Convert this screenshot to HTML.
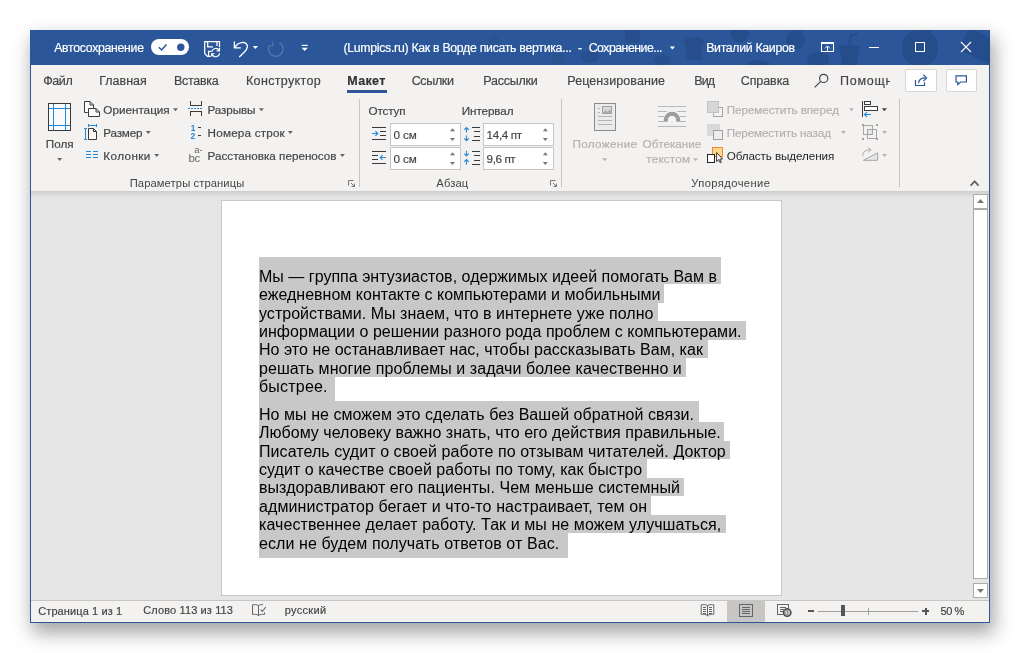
<!DOCTYPE html>
<html lang="ru"><head><meta charset="utf-8"><title>Word</title>
<style>
html,body{margin:0;padding:0;background:#fff;}
body{width:1020px;height:653px;position:relative;overflow:hidden;font-family:"Liberation Sans",sans-serif;}
.a{position:absolute;}
#win{left:30px;top:30px;width:960px;height:593px;background:#e6e6e6;box-shadow:3px 8.5px 18px 1px rgba(0,0,0,.36);}
#title{left:30px;top:30px;width:960px;height:35px;background:#2b579a;overflow:hidden;}
#ribbon{left:31px;top:65px;width:958px;height:126px;background:#f3f2f1;}
#rshadow{left:31px;top:191px;width:958px;height:8px;background:linear-gradient(#cdcdcd,#dadada 35%,#e2e2e2 70%,#e6e6e6);}
#bl{left:30px;top:65px;width:1px;height:558px;background:#2b579a;}
#br{left:989px;top:65px;width:1px;height:558px;background:#2b579a;}
#bb{left:30px;top:622px;width:960px;height:1px;background:#2b579a;}
#page{left:221px;top:200px;width:559px;height:394px;background:#fff;border:1px solid #c8c8c8;}
#status{left:31px;top:600px;width:958px;height:21px;background:#f3f2f1;border-top:1px solid #c6c6c6;}
#viewact{left:727px;top:601px;width:38px;height:21px;background:#c8c6c4;}
.t{position:absolute;white-space:pre;line-height:16px;-webkit-text-stroke:0.18px;}
.dl{position:absolute;left:259px;white-space:pre;font-size:16px;line-height:18px;color:#000;}
.hl{position:absolute;background:#c8c8c8;}
.inp{position:absolute;background:#fff;border:1px solid #c8c6c4;box-sizing:border-box;}
.btn{position:absolute;background:#fff;border:1px solid #d8d6d4;border-radius:2px;box-sizing:border-box;}
.sb{position:absolute;background:#fff;border:1px solid #ababab;box-sizing:border-box;}
#ico{position:absolute;left:0;top:0;width:1020px;height:653px;}
#txt{left:0;top:0;width:1020px;height:653px;will-change:transform;}

</style></head>
<body>
<div id="win" class="a"></div>
<div id="title" class="a">
<svg width="960" height="35" viewBox="30 30 960 35" style="position:absolute;left:0;top:0">
<g fill="#264d8b">
<circle cx="920" cy="48" r="18.5"/><ellipse cx="927" cy="31" rx="6" ry="4" transform="rotate(-35 927 31)"/>
<rect x="962" y="34" width="34" height="24" rx="2" transform="rotate(27 979 46)"/>
<path d="M838.5 45.5 H860.5 L856.5 66 H842.5 Z M848.2 45.5 L850.4 34.6 L857.6 32.6 L858 34.4 L852 36.2 L850.2 45.5 Z"/>
<ellipse cx="818" cy="59.5" rx="11" ry="7.5"/>
<circle cx="795.5" cy="40" r="9.5"/><ellipse cx="799" cy="30" rx="4" ry="2.5" transform="rotate(-35 799 30)"/>
<circle cx="739.5" cy="33.5" r="9"/>
<ellipse cx="759" cy="66" rx="12" ry="6"/>
</g>
<g fill="#274f8e">
<path d="M684 41 C684 36 704 36 704 41 C704 44 702 45 702 47 V60 H686 V47 C686 45 684 44 684 41 Z"/>
<rect x="625" y="30" width="15" height="13" rx="3"/>
<ellipse cx="662" cy="60" rx="8" ry="5"/>
<ellipse cx="590" cy="57" rx="9" ry="6"/>
</g>
<g fill="#29538f">
<ellipse cx="558" cy="59" rx="7" ry="5"/>
<ellipse cx="494" cy="41" rx="5" ry="6"/>
</g>
</svg>
</div>
<div id="ribbon" class="a"></div>
<div id="rshadow" class="a"></div>
<div id="page" class="a"></div>
<div id="status" class="a"></div>
<div id="viewact" class="a"></div>
<div id="bl" class="a"></div><div id="br" class="a"></div><div id="bb" class="a"></div>
<!-- scrollbar -->
<div class="sb" style="left:973px;top:194px;width:15px;height:15px"></div>
<div class="sb" style="left:973px;top:209px;width:15px;height:370px"></div>
<div class="sb" style="left:973px;top:583px;width:15px;height:15px"></div>
<!-- ribbon inputs and buttons -->
<div class="inp" style="left:390px;top:123px;width:71px;height:23px"></div>
<div class="inp" style="left:390px;top:147px;width:71px;height:23px"></div>
<div class="inp" style="left:483px;top:123px;width:71px;height:23px"></div>
<div class="inp" style="left:483px;top:147px;width:71px;height:23px"></div>
<div class="btn" style="left:905px;top:69px;width:32px;height:23px"></div>
<div class="btn" style="left:946px;top:69px;width:31px;height:23px"></div>
<div class="a" style="left:347px;top:90px;width:40px;height:3px;background:#2b579a"></div>
<div id="txt" class="a">
<div class="hl" style="left:259px;top:257px;width:462.3px;height:27px"></div>
<div class="hl" style="left:259px;top:284px;width:405.4px;height:19px"></div>
<div class="hl" style="left:259px;top:303px;width:398.5px;height:18px"></div>
<div class="hl" style="left:259px;top:321px;width:486.5px;height:19px"></div>
<div class="hl" style="left:259px;top:340px;width:448.7px;height:18px"></div>
<div class="hl" style="left:259px;top:358px;width:427.1px;height:19px"></div>
<div class="hl" style="left:259px;top:377px;width:75.9px;height:24px"></div>
<div class="dl" style="top:268px;letter-spacing:0.020px">Мы — группа энтузиастов, одержимых идеей помогать Вам в</div>
<div class="dl" style="top:286px;letter-spacing:0.009px">ежедневном контакте с компьютерами и мобильными</div>
<div class="dl" style="top:305px;letter-spacing:0.029px">устройствами. Мы знаем, что в интернете уже полно</div>
<div class="dl" style="top:323px;letter-spacing:0.032px">информации о решении разного рода проблем с компьютерами.</div>
<div class="dl" style="top:341px;letter-spacing:0.029px">Но это не останавливает нас, чтобы рассказывать Вам, как</div>
<div class="dl" style="top:360px;letter-spacing:0.048px">решать многие проблемы и задачи более качественно и</div>
<div class="dl" style="top:378px;letter-spacing:0.200px">быстрее.</div>
<div class="hl" style="left:259px;top:401px;width:440.1px;height:21px"></div>
<div class="hl" style="left:259px;top:422px;width:465.4px;height:19px"></div>
<div class="hl" style="left:259px;top:441px;width:470.8px;height:18px"></div>
<div class="hl" style="left:259px;top:459px;width:388.1px;height:19px"></div>
<div class="hl" style="left:259px;top:478px;width:424.5px;height:18px"></div>
<div class="hl" style="left:259px;top:496px;width:392.0px;height:19px"></div>
<div class="hl" style="left:259px;top:515px;width:466.9px;height:18px"></div>
<div class="hl" style="left:259px;top:533px;width:309.2px;height:25px"></div>
<div class="dl" style="top:406px;letter-spacing:0.048px">Но мы не сможем это сделать без Вашей обратной связи.</div>
<div class="dl" style="top:424px;letter-spacing:0.025px">Любому человеку важно знать, что его действия правильные.</div>
<div class="dl" style="top:443px;letter-spacing:0.067px">Писатель судит о своей работе по отзывам читателей. Доктор</div>
<div class="dl" style="top:461px;letter-spacing:0.037px">судит о качестве своей работы по тому, как быстро</div>
<div class="dl" style="top:479px;letter-spacing:0.052px">выздоравливают его пациенты. Чем меньше системный</div>
<div class="dl" style="top:498px;letter-spacing:0.102px">администратор бегает и что-то настраивает, тем он</div>
<div class="dl" style="top:516px;letter-spacing:0.073px">качественнее делает работу. Так и мы не можем улучшаться,</div>
<div class="dl" style="top:535px;letter-spacing:0.081px">если не будем получать ответов от Вас.</div>
<svg id="ico" viewBox="0 0 1020 653">
<!-- title bar: toggle -->
<rect x="151" y="39" width="38" height="16" rx="8" fill="#fff"/>
<path d="M158.8 47.2 L161.7 50 L166.4 44.4" fill="none" stroke="#2b579a" stroke-width="1.5"/>
<circle cx="180.8" cy="47.2" r="3.7" fill="#2b579a"/>
<!-- save icon -->
<g fill="none" stroke="#fff" stroke-width="1.25">
<path d="M210.6 56.3 H207.4 L204.7 53.6 V41.7 H219.5 V47.3"/>
<path d="M207.7 41.7 V46.8 H213 M217 41.7 V46"/>
<path d="M208.6 56 V51.3 H211.6"/>
<path d="M212 51.6 A3.9 3.9 0 0 1 219.2 50.4 M219.5 47.9 V50.8 H216.6" stroke-width="1.15"/>
<path d="M219.6 53.2 A3.9 3.9 0 0 1 212 54 M211.6 56.6 V53.7 H214.5" stroke-width="1.15"/>
</g>
<!-- undo -->
<g fill="none" stroke="#fff" stroke-width="1.3">
<path d="M234.4 41.4 V47.9 H240.8"/>
<path d="M234.8 47.6 C237.5 42.4 245.6 40.2 247.3 45.6 C248.4 49.8 243.2 53 239.2 57"/>
</g>
<path d="M252.8 46 H258 L255.4 49 Z" fill="#fff"/>
<!-- redo (disabled) -->
<g fill="none" stroke="#5577b0" stroke-width="1.3">
<path d="M279.4 42.6 A7.3 7.3 0 1 1 268.9 46.6"/>
<path d="M268.2 46 H272.7 V41.5" stroke-width="1.1"/>
</g>
<!-- customize QAT -->
<rect x="301.7" y="44.8" width="6" height="1.2" fill="#fff"/>
<path d="M301.6 47.8 H307.8 L304.7 51 Z" fill="#fff"/>
<!-- title dropdown -->
<path d="M669.8 46.6 H675 L672.4 49.6 Z" fill="#fff"/>
<!-- window controls -->
<g fill="none" stroke="#fff" stroke-width="1" shape-rendering="crispEdges">
<rect x="821.5" y="42.5" width="12" height="9"/>
<line x1="821" y1="43.5" x2="834" y2="43.5"/>
<line x1="869" y1="47.5" x2="879" y2="47.5"/>
<rect x="915.5" y="42.5" width="9" height="9"/>
</g>
<path d="M827.5 51 V46.2 M825 48.4 L827.5 45.9 L830 48.4" fill="none" stroke="#fff" stroke-width="1"/>
<path d="M961 42 L971 52 M971 42 L961 52" fill="none" stroke="#fff" stroke-width="1.1"/>

<!-- tab row: search -->
<g fill="none" stroke="#444" stroke-width="1.2">
<circle cx="823.7" cy="78.4" r="4.1"/>
<path d="M820.8 81.4 L814.6 87.4"/>
</g>
<!-- share icon -->
<g fill="none" stroke="#2b579a" stroke-width="1.2">
<path d="M915.5 80 V85.5 H924.5 V82.2"/>
<path d="M918.6 83.2 C918.8 79.6 921 77.9 925.4 77.9"/>
<path d="M923.4 74.8 L926.6 77.9 L923.4 81"/>
</g>
<!-- comment icon -->
<path d="M956 75.8 H966.4 V82 H960.6 L957.8 84.6 V82 H956 Z" fill="none" stroke="#2b579a" stroke-width="1.2"/>
<!-- group separators -->
<g fill="#c8c6c4" shape-rendering="crispEdges">
<rect x="359" y="99" width="1" height="88"/>
<rect x="561" y="99" width="1" height="88"/>
<rect x="899" y="99" width="1" height="88"/>
</g>
<!-- Polya (margins) -->
<rect x="48.5" y="103.5" width="22" height="27" fill="#fafafa" stroke="#3a3a3a" stroke-width="1" shape-rendering="crispEdges"/>
<g fill="#2488d8" shape-rendering="crispEdges">
<rect x="53" y="104" width="1" height="26"/><rect x="65" y="104" width="1" height="26"/>
<rect x="49" y="108" width="21" height="1"/><rect x="49" y="125" width="21" height="1"/>
</g>
<path d="M57.2 158 H62.2 L59.7 161 Z" fill="#666"/>
<!-- Orientation -->
<g fill="#fafafa" stroke="#3a3a3a" stroke-width="1" stroke-linejoin="miter">
<path d="M87.8 112.5 H84.5 V101.5 H90 L93.5 105 V108"/>
<path d="M90 101.5 V105 H93.5" fill="none"/>
<path d="M88.5 108.5 H96 L99.5 112 V116.5 H88.5 Z"/>
<path d="M96 108.5 V112 H99.5" fill="none"/>
</g>
<!-- Size -->
<g fill="none" stroke="#2488d8" stroke-width="1" shape-rendering="crispEdges">
<path d="M85.5 128 V140 M84 128.5 H87 M84 139.5 H87"/>
<path d="M88 125.5 H97 M88.5 124 V127 M96.5 124 V127"/>
</g>
<g fill="#fafafa" stroke="#3a3a3a" stroke-width="1">
<path d="M88.5 128.5 H93.5 L96.5 131.5 V139.5 H88.5 Z"/>
<path d="M93.5 128.5 V131.5 H96.5" fill="none"/>
</g>
<!-- Columns -->
<g fill="#2488d8" shape-rendering="crispEdges">
<rect x="86" y="151" width="5" height="1"/><rect x="93" y="151" width="5" height="1"/>
<rect x="86" y="154" width="5" height="1"/><rect x="93" y="154" width="5" height="1"/>
<rect x="86" y="157" width="5" height="1"/><rect x="93" y="157" width="5" height="1"/>
</g>
<!-- dropdown arrows group 1 -->
<g fill="#666">
<path d="M173 108.2 H178 L175.5 111.2 Z"/>
<path d="M145.8 131.1 H150.8 L148.3 134.1 Z"/>
<path d="M154.2 154 H159.2 L156.7 157 Z"/>
<path d="M258.9 108.2 H263.9 L261.4 111.2 Z"/>
<path d="M287.8 131.1 H292.8 L290.3 134.1 Z"/>
<path d="M339.9 154 H344.9 L342.4 157 Z"/>
</g>
<!-- Breaks -->
<g fill="none" stroke="#3a3a3a" stroke-width="1" shape-rendering="crispEdges">
<path d="M190.5 101 V105.5 H201.5 V101"/>
<path d="M190.5 116 V111.5 H201.5 V116"/>
</g>
<path d="M188 108.5 H203" stroke="#2488d8" stroke-width="1" stroke-dasharray="2 1" fill="none" shape-rendering="crispEdges"/>
<!-- Line numbers -->
<text x="190.8" y="130.8" font-family="Liberation Sans, sans-serif" font-size="8.4" font-weight="700" fill="#2488d8">1</text>
<text x="190.6" y="139" font-family="Liberation Sans, sans-serif" font-size="8.4" font-weight="700" fill="#2488d8">2</text>
<g fill="#3a3a3a" shape-rendering="crispEdges"><rect x="198" y="127" width="3" height="1"/><rect x="198" y="135" width="3" height="1"/></g>
<!-- Hyphenation -->
<text x="194.2" y="153.4" font-family="Liberation Sans, sans-serif" font-size="9.5" fill="#666">a-</text>
<text x="188.4" y="161.6" font-family="Liberation Sans, sans-serif" font-size="11.5" fill="#666" letter-spacing="-0.4">bc</text>
<!-- dialog launchers -->
<g fill="none" stroke="#777" stroke-width="1">
<path d="M353.5 180.5 H348.5 V185.5"/><path d="M351 183 L354.5 186.5 M354.5 183.6 V186.5 H351.6"/>
<path d="M555.5 180.5 H550.5 V185.5"/><path d="M553 183 L556.5 186.5 M556.5 183.6 V186.5 H553.6"/>
</g>
<!-- collapse chevron -->
<path d="M970.6 185.6 L974.6 181.4 L978.6 185.6" fill="none" stroke="#666" stroke-width="1.8"/>

<!-- Indent left icon -->
<g fill="#3a3a3a" shape-rendering="crispEdges">
<rect x="372" y="127" width="14" height="1"/><rect x="380" y="131" width="6" height="1"/><rect x="380" y="135" width="6" height="1"/><rect x="372" y="139" width="14" height="1"/>
<rect x="372" y="151" width="14" height="1"/><rect x="372" y="155" width="6" height="1"/><rect x="372" y="159" width="6" height="1"/><rect x="372" y="163" width="14" height="1"/>
<rect x="472" y="127" width="8" height="1"/><rect x="474" y="131" width="6" height="1"/><rect x="474" y="136" width="6" height="1"/><rect x="472" y="140" width="8" height="1"/>
<rect x="472" y="151" width="8" height="1"/><rect x="474" y="155" width="6" height="1"/><rect x="474" y="160" width="6" height="1"/><rect x="472" y="164" width="8" height="1"/>
</g>
<g fill="none" stroke="#2488d8" stroke-width="1.1">
<path d="M372 133.5 H377.6 M375.4 131.1 L377.8 133.5 L375.4 135.9"/>
<path d="M386 157.5 H380.4 M382.6 155.1 L380.2 157.5 L382.6 159.9"/>
<path d="M466.5 127.6 V132.6 M464.2 129.8 L466.5 127.5 L468.8 129.8"/>
<path d="M466.5 135.4 V140.6 M464.2 138.4 L466.5 140.7 L468.8 138.4"/>
<path d="M466.5 150.8 V155.8 M464.2 153.6 L466.5 155.9 L468.8 153.6"/>
<path d="M466.5 164.8 V159.6 M464.2 161.8 L466.5 159.5 L468.8 161.8"/>
</g>
<!-- spinner arrows -->
<g fill="#777">
<path d="M450 131.2 H455 L452.5 128.2 Z"/><path d="M450 138 H455 L452.5 141 Z"/>
<path d="M450 155.3 H455 L452.5 152.3 Z"/><path d="M450 162 H455 L452.5 165 Z"/>
<path d="M542.8 131.2 H547.8 L545.3 128.2 Z"/><path d="M542.8 138 H547.8 L545.3 141 Z"/>
<path d="M542.8 155.3 H547.8 L545.3 152.3 Z"/><path d="M542.8 162 H547.8 L545.3 165 Z"/>
</g>
<!-- Position icon (disabled) -->
<rect x="594.5" y="103.5" width="21" height="27" fill="#ebebeb" stroke="#8c8c8c" stroke-width="1" shape-rendering="crispEdges"/>
<rect x="602.5" y="106.5" width="9" height="7" fill="#d8d8d8" stroke="#a0a0a0" stroke-width="1" shape-rendering="crispEdges"/>
<path d="M603 113 L605.5 110 L607.5 112 L609.5 109.5 L611 111.5 V113 Z" fill="#aaa"/>
<g fill="#b4b4b4" shape-rendering="crispEdges">
<rect x="598" y="108" width="2" height="1"/><rect x="598" y="112" width="2" height="1"/>
<rect x="598" y="116" width="14" height="1"/><rect x="598" y="120" width="14" height="1"/><rect x="598" y="124" width="14" height="1"/>
</g>
<!-- Wrap text icon (disabled) -->
<g fill="#b8b8b8" shape-rendering="crispEdges">
<rect x="658" y="106" width="28" height="1"/>
<rect x="658" y="111" width="9" height="1"/><rect x="677" y="111" width="9" height="1"/>
<rect x="658" y="116" width="6" height="1"/><rect x="680" y="116" width="6" height="1"/>
<rect x="658" y="121" width="6" height="1"/><rect x="680" y="121" width="6" height="1"/>
<rect x="658" y="126" width="28" height="1"/>
</g>
<path d="M663.8 121.8 V120 A8.2 8.2 0 0 1 680.2 120 V121.8 H676.2 V120 A4.2 4.2 0 0 0 667.8 120 V121.8 Z" fill="#9c9c9c"/>
<!-- disabled dropdown arrows -->
<g fill="#b4b4b4">
<path d="M602.2 158.2 H607.2 L604.7 161.2 Z"/>
<path d="M693 158.2 H698 L695.5 161.2 Z"/>
<path d="M849 108.2 H854 L851.5 111.2 Z"/>
<path d="M841 131.1 H846 L843.5 134.1 Z"/>
<path d="M882 131.1 H887 L884.5 134.1 Z"/>
<path d="M882 154 H887 L884.5 157 Z"/>
</g>
<path d="M881.8 108.2 H887 L884.4 111.2 Z" fill="#444"/>
<!-- Bring forward (disabled) -->
<path d="M719 107.5 H722.5 V116.5 H713.5 V113" fill="none" stroke="#a6a6a6" stroke-width="1" shape-rendering="crispEdges"/>
<rect x="707.5" y="101.5" width="11" height="11" fill="#d6d6d6" stroke="#c2c2c2" stroke-width="1" shape-rendering="crispEdges"/>
<!-- Send backward (disabled) -->
<rect x="707" y="124" width="13" height="12" fill="#d9d9d9"/>
<rect x="713.5" y="130.5" width="9" height="9" fill="#ededed" stroke="#a0a0a0" stroke-width="1" shape-rendering="crispEdges"/>
<!-- Selection pane -->
<rect x="712.5" y="147.5" width="10" height="9" fill="#fbd88a" stroke="#ef8a2c" stroke-width="1" shape-rendering="crispEdges"/>
<rect x="707.5" y="154.5" width="7" height="8" fill="#fff" stroke="#222" stroke-width="1" shape-rendering="crispEdges"/>
<path d="M716.6 152.6 V161.6 L718.7 159.6 L720.2 162.8 L721.4 162.2 L719.9 159.2 L722.6 159 Z" fill="#fff" stroke="#222" stroke-width="0.9"/>
<!-- Align -->
<g shape-rendering="crispEdges">
<rect x="862" y="101" width="1" height="16" fill="#3a3a3a"/>
<rect x="864.5" y="101.5" width="6" height="3" fill="#fff" stroke="#3a3a3a" stroke-width="1"/>
<rect x="864.7" y="106.7" width="13" height="4" fill="#fff" stroke="#3a3a3a" stroke-width="1.4"/>
</g>
<path d="M871 114.5 H864.6 M867 112.1 L864.4 114.5 L867 116.9" fill="none" stroke="#2488d8" stroke-width="1.1"/>
<!-- Group (disabled) -->
<g fill="none" stroke="#a6a6a6" stroke-width="1" shape-rendering="crispEdges">
<rect x="863.5" y="125.5" width="9" height="9"/>
<rect x="867.5" y="129.5" width="9" height="9"/>
</g>
<rect x="868" y="130" width="4" height="4" fill="#e4e4e4"/>
<g fill="#a0a0a0" shape-rendering="crispEdges">
<rect x="862" y="124" width="2" height="2"/><rect x="876" y="124" width="2" height="2"/>
<rect x="862" y="138" width="2" height="2"/><rect x="876" y="138" width="2" height="2"/>
</g>
<!-- Rotate (disabled) -->
<path d="M863.4 160.3 H877.6 V152.8 Z" fill="#e6e6e6" stroke="#a6a6a6" stroke-width="1"/>
<path d="M863 156.2 C861.8 151.8 866.5 149.6 870.6 149.9 M868.2 147.4 L870.8 149.9 L868.2 152.4" fill="none" stroke="#a6a6a6" stroke-width="1"/>

<!-- scrollbar arrows -->
<path d="M977 203 H984 L980.5 199 Z" fill="#777"/>
<path d="M977 589 H984 L980.5 593 Z" fill="#777"/>
<!-- status: proofing icon -->
<g fill="none" stroke="#666" stroke-width="1">
<path d="M258.5 605.5 V616 M258.5 605.5 C257 604.6 254.5 604.5 252.5 604.8 V614.4 C254.5 614.1 257 614.3 258.5 615.5 C260 614.3 262.5 614.1 264.5 614.4 V612.4 M258.5 605.5 C260 604.6 261.5 604.5 263 604.7"/>
<path d="M260.6 609.6 L262.5 611.5 L265.7 607" stroke-width="1.1"/>
</g>
<!-- read mode -->
<g fill="none" stroke="#666" stroke-width="1">
<path d="M707.5 605.5 V616.4 M707.5 605.5 C705.8 604.6 703.2 604.5 701.2 604.8 V614.4 C703.2 614.1 705.8 614.3 707.5 615.5 C709.2 614.3 711.8 614.1 713.8 614.4 V604.8 C711.8 604.5 709.2 604.6 707.5 605.5"/>
<path d="M702.6 607.5 H706.2 M702.6 609.5 H706.2 M702.6 611.5 H706.2 M702.6 613.5 H706.2 M708.8 607.5 H712.4 M708.8 609.5 H712.4 M708.8 611.5 H712.4 M708.8 613.5 H712.4" stroke-width="1" shape-rendering="crispEdges"/>
</g>
<!-- print layout -->
<g shape-rendering="crispEdges">
<rect x="739.5" y="604.5" width="13" height="12" fill="none" stroke="#666" stroke-width="1"/>
<g fill="#666"><rect x="742" y="607" width="8" height="1"/><rect x="742" y="609" width="8" height="1"/><rect x="742" y="611" width="8" height="1"/><rect x="742" y="613" width="8" height="1"/></g>
</g>
<!-- web layout -->
<g shape-rendering="crispEdges">
<path d="M783 614.5 H777.5 V604.5 H788.5 V608" fill="none" stroke="#666" stroke-width="1"/>
<g fill="#666"><rect x="780" y="607" width="6" height="1"/><rect x="780" y="609" width="4" height="1"/><rect x="780" y="611" width="3" height="1"/></g>
</g>
<circle cx="787.2" cy="612.6" r="3.8" fill="#9a9a9a" stroke="#4a4a4a" stroke-width="1.4"/>
<path d="M785.2 611.2 L786.8 612.2 L786.2 614.4 M788.6 610.4 L789.4 612.4 L788.4 614.4" fill="none" stroke="#e8e8e8" stroke-width="0.9"/>
<!-- zoom slider -->
<g shape-rendering="crispEdges">
<rect x="808" y="610" width="6" height="2" fill="#555"/>
<rect x="818" y="611" width="100" height="1" fill="#a0a0a0"/>
<rect x="868" y="608" width="1" height="7" fill="#a0a0a0"/>
<rect x="840.5" y="605" width="4.5" height="11" fill="#555"/>
<rect x="922" y="610" width="7" height="2" fill="#555"/><rect x="924.5" y="607.5" width="2" height="7" fill="#555"/>
</g>

</svg>
<span class="t" style="left:54.2px;top:40.0px;font-size:12.3px;letter-spacing:-0.304px;color:#ffffff;">Автосохранение</span>
<span class="t" style="left:343.4px;top:40.0px;font-size:12.3px;letter-spacing:-0.289px;color:#ffffff;">(Lumpics.ru) Как в Ворде писать вертика...</span>
<span class="t" style="left:578.1px;top:40.0px;font-size:12.3px;letter-spacing:-0.609px;color:#ffffff;">-</span>
<span class="t" style="left:588.7px;top:40.0px;font-size:12.3px;letter-spacing:-0.500px;color:#ffffff;">Сохранение...</span>
<span class="t" style="left:706.2px;top:40.0px;font-size:12.3px;letter-spacing:-0.310px;color:#ffffff;">Виталий Каиров</span>
<span class="t" style="left:43.3px;top:72.5px;font-size:12.5px;letter-spacing:-0.445px;color:#444444;">Файл</span>
<span class="t" style="left:99.3px;top:72.5px;font-size:12.5px;letter-spacing:-0.030px;color:#444444;">Главная</span>
<span class="t" style="left:174.0px;top:72.5px;font-size:12.5px;letter-spacing:-0.295px;color:#444444;">Вставка</span>
<span class="t" style="left:246.0px;top:72.5px;font-size:12.5px;letter-spacing:0.342px;color:#444444;">Конструктор</span>
<span class="t" style="left:347.3px;top:72.5px;font-size:12.5px;letter-spacing:0.328px;color:#333333;font-weight:700;">Макет</span>
<span class="t" style="left:411.7px;top:72.5px;font-size:12.5px;letter-spacing:-0.343px;color:#444444;">Ссылки</span>
<span class="t" style="left:483.3px;top:72.5px;font-size:12.5px;letter-spacing:-0.244px;color:#444444;">Рассылки</span>
<span class="t" style="left:567.3px;top:72.5px;font-size:12.5px;letter-spacing:0.090px;color:#444444;">Рецензирование</span>
<span class="t" style="left:694.3px;top:72.5px;font-size:12.5px;letter-spacing:-0.962px;color:#444444;">Вид</span>
<span class="t" style="left:740.7px;top:72.5px;font-size:12.5px;letter-spacing:-0.074px;color:#444444;">Справка</span>
<span class="t" style="left:840.0px;top:72.5px;font-size:12.5px;letter-spacing:0.766px;color:#444444;width:49.5px;overflow:hidden;">Помощн</span>
<span class="t" style="left:45.8px;top:135.9px;font-size:11.7px;letter-spacing:0.034px;color:#444444;">Поля</span>
<span class="t" style="left:103.3px;top:101.6px;font-size:11.7px;letter-spacing:0.005px;color:#444444;">Ориентация</span>
<span class="t" style="left:103.3px;top:124.5px;font-size:11.7px;letter-spacing:-0.194px;color:#444444;">Размер</span>
<span class="t" style="left:103.3px;top:147.7px;font-size:11.7px;letter-spacing:0.398px;color:#444444;">Колонки</span>
<span class="t" style="left:207.6px;top:101.6px;font-size:11.7px;letter-spacing:-0.143px;color:#444444;">Разрывы</span>
<span class="t" style="left:207.6px;top:124.5px;font-size:11.7px;letter-spacing:0.187px;color:#444444;">Номера строк</span>
<span class="t" style="left:207.6px;top:147.7px;font-size:11.7px;letter-spacing:-0.009px;color:#444444;">Расстановка переносов</span>
<span class="t" style="left:129.7px;top:174.9px;font-size:11.2px;letter-spacing:0.106px;color:#444444;-webkit-text-stroke:0;">Параметры страницы</span>
<span class="t" style="left:368.4px;top:102.7px;font-size:11.7px;letter-spacing:-0.106px;color:#444444;">Отступ</span>
<span class="t" style="left:461.8px;top:102.7px;font-size:11.7px;letter-spacing:-0.112px;color:#444444;">Интервал</span>
<span class="t" style="left:393.4px;top:126.5px;font-size:11.7px;letter-spacing:-0.047px;color:#444444;">0 см</span>
<span class="t" style="left:393.4px;top:150.5px;font-size:11.7px;letter-spacing:-0.047px;color:#444444;">0 см</span>
<span class="t" style="left:486.6px;top:126.5px;font-size:11.7px;letter-spacing:-0.348px;color:#444444;">14,4 пт</span>
<span class="t" style="left:486.6px;top:150.5px;font-size:11.7px;letter-spacing:-0.417px;color:#444444;">9,6 пт</span>
<span class="t" style="left:436.3px;top:174.9px;font-size:11.2px;letter-spacing:0.127px;color:#444444;-webkit-text-stroke:0;">Абзац</span>
<span class="t" style="left:572.5px;top:135.9px;font-size:11.7px;letter-spacing:0.342px;color:#b3b1af;">Положение</span>
<span class="t" style="left:642.6px;top:135.9px;font-size:11.7px;letter-spacing:-0.022px;color:#b3b1af;">Обтекание</span>
<span class="t" style="left:646.3px;top:151.2px;font-size:11.7px;letter-spacing:0.187px;color:#b3b1af;">текстом</span>
<span class="t" style="left:726.7px;top:101.6px;font-size:11.7px;letter-spacing:-0.068px;color:#b3b1af;">Переместить вперед</span>
<span class="t" style="left:726.7px;top:124.5px;font-size:11.7px;letter-spacing:-0.129px;color:#b3b1af;">Переместить назад</span>
<span class="t" style="left:726.7px;top:147.7px;font-size:11.7px;letter-spacing:-0.106px;color:#262626;-webkit-text-stroke:0;">Область выделения</span>
<span class="t" style="left:691.2px;top:174.9px;font-size:11.2px;letter-spacing:0.414px;color:#444444;-webkit-text-stroke:0;">Упорядочение</span>
<span class="t" style="left:38.2px;top:603.2px;font-size:11px;letter-spacing:0.110px;color:#444444;">Страница 1 из 1</span>
<span class="t" style="left:143.3px;top:602.2px;font-size:11px;letter-spacing:0.115px;color:#444444;">Слово 113 из 113</span>
<span class="t" style="left:284.7px;top:602.2px;font-size:11px;letter-spacing:0.319px;color:#444444;">русский</span>
<span class="t" style="left:940.5px;top:602.5px;font-size:11px;letter-spacing:-0.459px;color:#444444;">50 %</span>
</div>

</body></html>
